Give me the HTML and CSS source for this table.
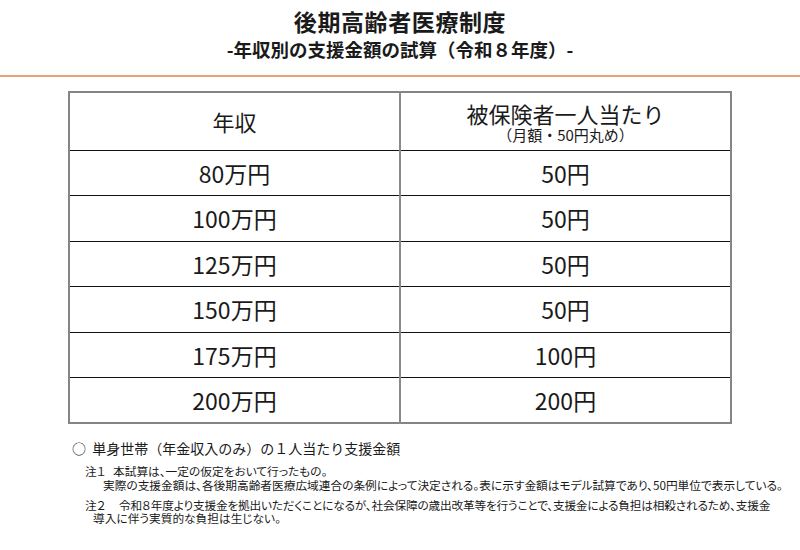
FILE: index.html
```html
<!DOCTYPE html>
<html lang="ja">
<head>
<meta charset="utf-8">
<link rel="stylesheet" href="styles.css">
</head>
<body>
<header class="head">
  <h1 class="title">後期高齢者医療制度</h1>
  <p class="subtitle">-年収別の支援金額の試算（令和８年度）-</p>
</header>
<main class="content">
  <table class="calc">
    <thead>
      <tr>
        <th class="h-main">年収</th>
        <th class="h-main"><span class="h-line">被保険者一人当たり</span><span class="h-sub">（月額・50円丸め）</span></th>
      </tr>
    </thead>
    <tbody>
      <tr><td>80万円</td><td>50円</td></tr>
      <tr><td>100万円</td><td>50円</td></tr>
      <tr><td>125万円</td><td>50円</td></tr>
      <tr><td>150万円</td><td>50円</td></tr>
      <tr><td>175万円</td><td>100円</td></tr>
      <tr><td>200万円</td><td>200円</td></tr>
    </tbody>
  </table>
  <p class="lead">○&nbsp;&nbsp;単身世帯（年金収入のみ）の１人当たり支援金額</p>
  <div class="note n1">
    <p class="nl"><span class="tag">注１</span>本試算は、一定の仮定をおいて行ったもの。</p>
    <p class="nl ind">実際の支援金額は、各後期高齢者医療広域連合の条例によって決定される。表に示す金額はモデル試算であり、50円単位で表示している。</p>
  </div>
  <div class="note n2">
    <p class="nl"><span class="tag tag2">注２</span><span class="tight">令和８年度より支援金を拠出いただくことになるが、社会保障の歳出改革等を行うことで、支援金による負担は相殺されるため、支援金</span></p>
    <p class="nl ind2">導入に伴う実質的な負担は生じない。</p>
  </div>
</main>
</body>
</html>
```
FILE: styles.css
```css
* { box-sizing: border-box; }
html, body { margin: 0; padding: 0; }
body {
  width: 800px;
  height: 550px;
  background: #fff;
  color: #1a1a1a;
  font-family: "Noto Sans CJK JP", "Noto Sans", sans-serif;
  overflow: hidden;
}
.head {
  text-align: center;
  padding-top: 7px;
  border-bottom: 2px solid #e9a475;
  height: 77px;
}
.title {
  margin: 0;
  font-size: 23px;
  line-height: 29px;
  font-weight: 700;
  letter-spacing: 0.6px;
}
.subtitle {
  margin: 2px 0 0;
  font-size: 18.5px;
  line-height: 22px;
  font-weight: 700;
}
.content {
  padding: 14px 0 0 68px;
}
.calc {
  width: 664px;
  border-collapse: collapse;
  border: 2px solid #858585;
  table-layout: fixed;
}
.calc th, .calc td {
  width: 50%;
  text-align: center;
  font-weight: 400;
  border-top: 1px solid #111;
  font-size: 23px;
  padding: 0;
}
.calc th + th, .calc td + td { border-left: 2px solid #8a8a8a; }
.calc th { height: 58px; font-size: 22px; }
.calc td { height: 45.5px; line-height: 26px; }
.h-line { display: block; font-size: 22px; line-height: 24px; margin-top: 2px; }
.h-sub { display: block; font-size: 15px; line-height: 18px; margin-top: 1px; }
.lead {
  margin: 15px 0 0 4px;
  font-size: 14px;
  line-height: 18px;
}
.note {
  margin-left: 17px;
  font-size: 11.7px;
  white-space: nowrap;
  font-feature-settings: "palt";
}
.note p { margin: 0; }
.tag { display: inline-block; width: 28px; }
.tag2 { width: 34px; }
.tight { letter-spacing: -0.2px; }
.n1 { margin-top: 7px; }
.n1 .nl { line-height: 14px; }
.n1 .ind { padding-left: 18px; }
.n2 { margin-top: 7px; }
.n2 .nl { line-height: 12.5px; }
.n2 .ind2 { padding-left: 8px; }
```
